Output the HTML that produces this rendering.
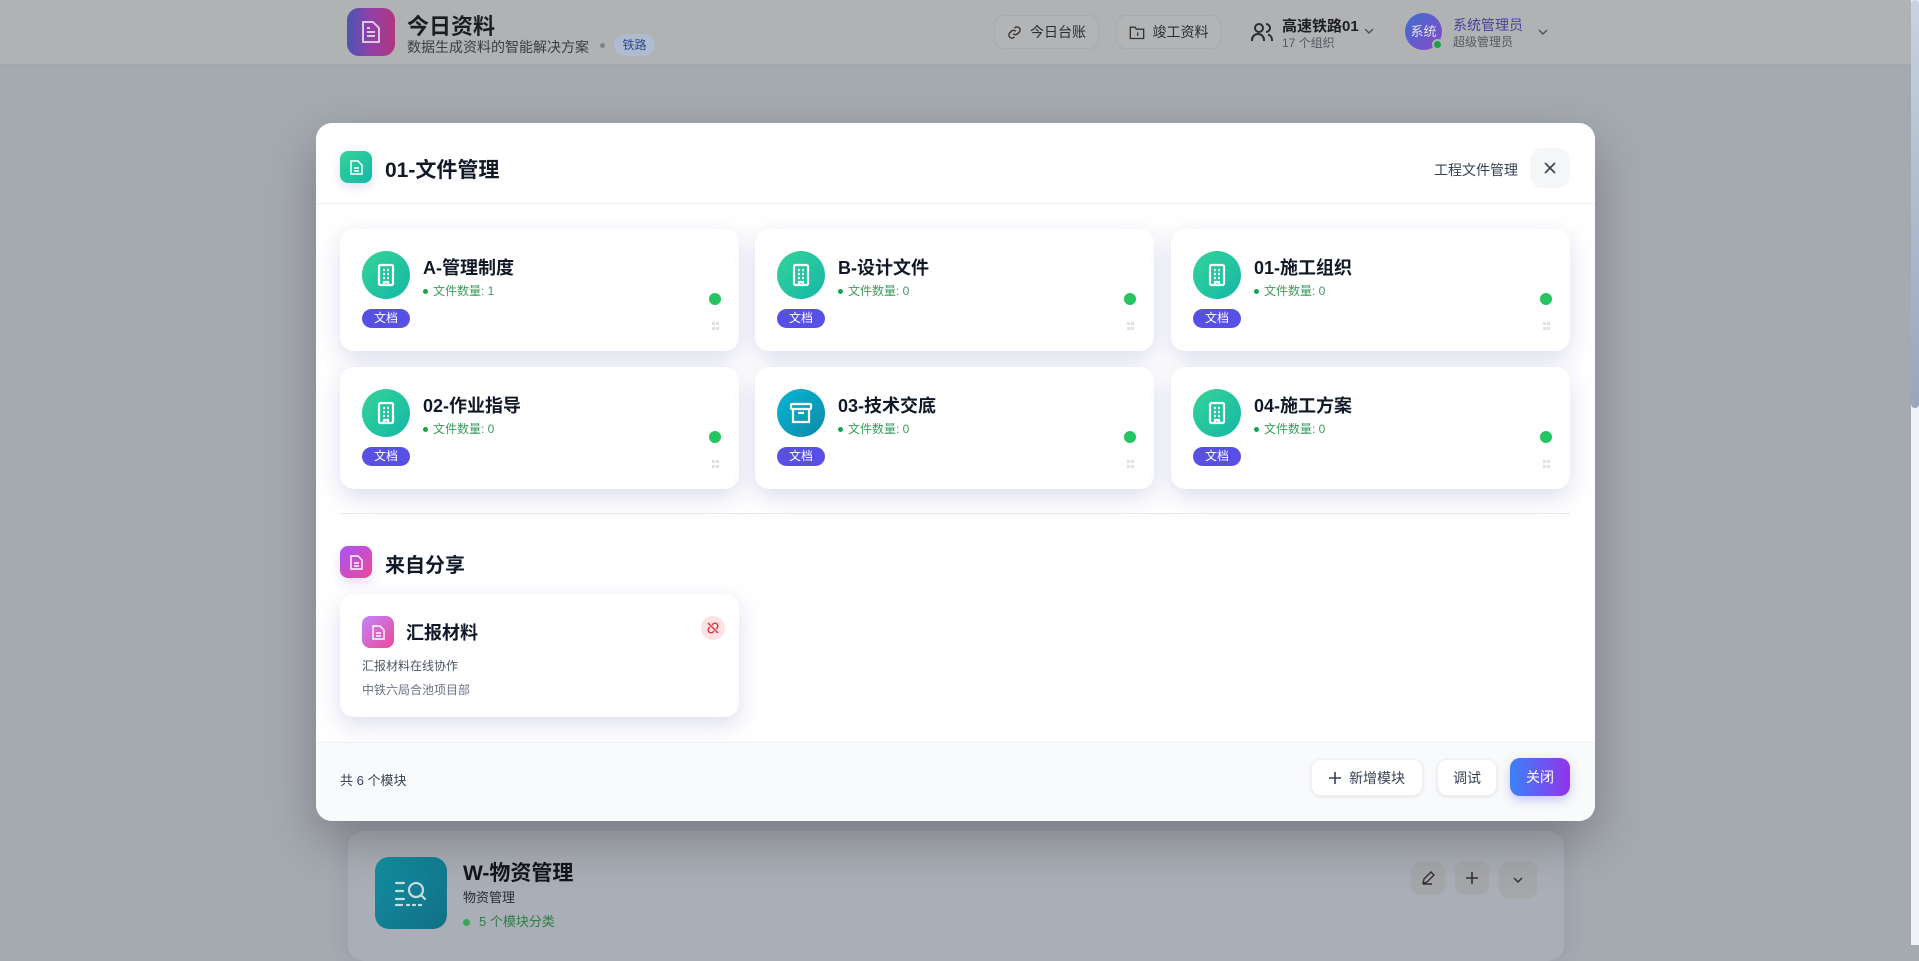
<!DOCTYPE html>
<html><head><meta charset="utf-8"><style>
*{box-sizing:border-box;margin:0;padding:0}
body{width:1919px;height:945px;overflow:hidden;background:#a5a9b0;font-family:"Liberation Sans","Noto Sans CJK SC",sans-serif;position:relative;color:#111827}
.abs{position:absolute}
.hdr{left:0;top:0;width:1911px;height:65px;background:#b1b2b4;border-bottom:1px solid #a2a5aa}
.sb{left:1911px;top:0;width:8px;height:945px;background:#eef1f6}
.sbt{left:1911px;top:0;width:8px;height:408px;background:linear-gradient(#c8d2e0,#98a6bc);border-radius:4px}
.hbtn{top:15px;height:34px;border:1px solid #a8aaad;border-radius:10px;background:#b3b4b6;font-size:14px;color:#2a2d33;display:flex;align-items:center;justify-content:center;gap:8px;white-space:nowrap}
.modal{left:316px;top:123px;width:1279px;height:698px;background:#fff;border-radius:16px;overflow:hidden;box-shadow:0 20px 50px rgba(0,0,0,.25)}
.card{width:399px;height:122px;background:#fff;border-radius:14px;box-shadow:0 8px 24px rgba(99,102,180,.22)}
.circ{left:22px;top:22px;width:48px;height:48px;border-radius:50%;background:linear-gradient(135deg,#34d399,#14b8a6);display:flex;align-items:center;justify-content:center}
.ct{left:83px;top:25px;font-size:18px;font-weight:bold;color:#111827}
.cc{left:83px;top:53px;font-size:12px;color:#3b9b5c}
.cc:before{content:"";display:inline-block;width:5px;height:5px;border-radius:50%;background:#16a34a;margin-right:5px;vertical-align:middle}
.badge{left:22px;top:80px;width:48px;height:19px;border-radius:10px;background:#5850e4;color:#fff;font-size:12px;text-align:center;line-height:19px}
.gd{left:369px;top:64px;width:12px;height:12px;border-radius:50%;background:#22c55e}
.hd{left:372px;top:93px;width:7px;height:9px}
.hd:before,.hd:after{content:"";position:absolute;left:0;width:7px;height:3px;border-left:3px solid #dcdfe4;border-right:3px solid #dcdfe4;box-sizing:border-box}
.hd:before{top:0}.hd:after{top:5px}
.fb{top:636px;height:37px;border-radius:10px;background:#fff;box-shadow:0 1px 3px rgba(0,0,0,.1);border:1px solid #eef0f3;font-size:14px;color:#374151;display:flex;align-items:center;justify-content:center;gap:8px}
.bld{width:18px;height:24px}
</style></head><body>
<div class="abs hdr"></div>
<div class="abs" style="left:347px;top:8px;width:48px;height:48px;border-radius:12px;background:linear-gradient(90deg,#4a55b4,#9340a6,#b1367e);display:flex;align-items:center;justify-content:center">
<svg width="22" height="24" viewBox="0 0 22 24" fill="none" stroke="#d8c8e0" stroke-width="2"><path d="M3 2h10l6 6v14H3z"/><path d="M7 12h8M7 16h8M7 8h3"/></svg></div>
<div class="abs" style="left:407px;top:9px;font-size:22px;font-weight:bold;color:#1c1d22">今日资料</div>
<div class="abs" style="left:407px;top:37px;font-size:14px;color:#3b3d44">数据生成资料的智能解决方案</div>
<div class="abs" style="left:600px;top:43px;width:5px;height:5px;border-radius:50%;background:#7c818a"></div>
<div class="abs" style="left:614px;top:34px;width:41px;height:22px;border-radius:11px;background:#aebbd0;color:#2f4a86;font-size:12px;text-align:center;line-height:22px">铁路</div>
<div class="abs hbtn" style="left:994px;width:105px"><svg width="15" height="15" viewBox="0 0 24 24" fill="none" stroke="#333" stroke-width="2.2"><path d="M10 14a5 5 0 0 0 7 0l3-3a5 5 0 0 0-7-7l-1 1M14 10a5 5 0 0 0-7 0l-3 3a5 5 0 0 0 7 7l1-1"/></svg>今日台账</div>
<div class="abs hbtn" style="left:1116px;width:105px"><svg width="16" height="15" viewBox="0 0 24 22" fill="none" stroke="#333" stroke-width="2"><path d="M2 3h7l2 3h11v14H2z"/><path d="M13 11v5"/></svg>竣工资料</div>
<svg class="abs" style="left:1250px;top:20px" width="24" height="24" viewBox="0 0 24 24" fill="none" stroke="#2a2d33" stroke-width="2"><circle cx="9" cy="8" r="4"/><path d="M2 21v-1a6 6 0 0 1 12 0v1M16 4a4 4 0 0 1 0 8M22 21v-1a6 6 0 0 0-4-5.6"/></svg>
<div class="abs" style="left:1282px;top:15px;font-size:15px;font-weight:bold;color:#1c1d22">高速铁路01</div>
<div class="abs" style="left:1282px;top:34px;font-size:12px;color:#555a62">17 个组织</div>
<svg class="abs" style="left:1363px;top:26px" width="12" height="10" viewBox="0 0 12 10" fill="none" stroke="#555" stroke-width="1.5"><path d="M2 3l4 4 4-4"/></svg>
<div class="abs" style="left:1405px;top:13px;width:37px;height:37px;border-radius:50%;background:linear-gradient(135deg,#3b6fd0,#8a48c8);color:#e6e2f0;font-size:13px;line-height:37px;text-align:center">系统</div>
<div class="abs" style="left:1432px;top:39px;width:11px;height:11px;border-radius:50%;background:#16a34a;border:2px solid #b1b2b4"></div>
<div class="abs" style="left:1453px;top:15px;font-size:14px;color:#4a3f9a">系统管理员</div>
<div class="abs" style="left:1453px;top:33px;font-size:12px;color:#555a62">超级管理员</div>
<svg class="abs" style="left:1537px;top:27px" width="12" height="10" viewBox="0 0 12 10" fill="none" stroke="#555" stroke-width="1.5"><path d="M2 3l4 4 4-4"/></svg>

<!-- background card -->
<div class="abs" style="left:348px;top:831px;width:1216px;height:130px;border-radius:16px;background:#aaaeb6;box-shadow:0 0 20px rgba(80,80,120,.15)"></div>
<div class="abs" style="left:375px;top:857px;width:72px;height:72px;border-radius:14px;background:linear-gradient(135deg,#1590a2,#0f6f86);display:flex;align-items:center;justify-content:center">
<svg width="34" height="28" viewBox="0 0 34 28" fill="none" stroke="#c6dde2" stroke-width="2.2" stroke-linecap="round"><path d="M2 4h8M2 12h7M2 20h8M2 26h6M13 26h2M19 26h2M25 26h2"/><circle cx="22" cy="11" r="7"/><path d="M27 16l4 4"/></svg></div>
<div class="abs" style="left:463px;top:857px;font-size:21px;font-weight:bold;color:#141518">W-物资管理</div>
<div class="abs" style="left:463px;top:887px;font-size:13px;color:#2a2d33">物资管理</div>
<div class="abs" style="left:463px;top:911px;font-size:13px;color:#2f7d45"><span style="display:inline-block;width:7px;height:7px;border-radius:50%;background:#3aa35c;margin-right:9px;vertical-align:middle"></span>5 个模块分类</div>
<div class="abs" style="left:1411px;top:861px;width:34px;height:34px;border-radius:10px;background:#a6a7aa;display:flex;align-items:center;justify-content:center"><svg width="16" height="16" viewBox="0 0 16 16" fill="none" stroke="#333" stroke-width="1.4"><path d="M3 13l1-4 7-7 3 3-7 7zM3 14h9"/></svg></div>
<div class="abs" style="left:1455px;top:861px;width:34px;height:34px;border-radius:10px;background:#a6a7aa;display:flex;align-items:center;justify-content:center"><svg width="14" height="14" viewBox="0 0 14 14" stroke="#333" stroke-width="1.6"><path d="M7 1v12M1 7h12"/></svg></div>
<div class="abs" style="left:1499px;top:861px;width:38px;height:38px;border-radius:10px;background:#a6a7aa;display:flex;align-items:center;justify-content:center"><svg width="12" height="8" viewBox="0 0 12 8" fill="none" stroke="#333" stroke-width="1.5"><path d="M2 2l4 4 4-4"/></svg></div>

<div class="abs sb"></div><div class="abs sbt"></div>

<div class="abs modal">
 <div class="abs" style="left:0;top:0;width:1279px;height:81px;border-bottom:1px solid #eef0f3"></div>
 <div class="abs" style="left:24px;top:28px;width:32px;height:32px;border-radius:8px;background:linear-gradient(135deg,#34d399,#14b8a6);display:flex;align-items:center;justify-content:center;box-shadow:0 4px 10px rgba(100,100,200,.2)"><svg width="13" height="15" viewBox="0 0 13 15" fill="none" stroke="#fff" stroke-width="1.4"><path d="M1 1h7l4 4v9H1z"/><path d="M4 8h5M4 11h5"/></svg></div>
 <div class="abs" style="left:69px;top:31px;font-size:21px;font-weight:bold;color:#111827">01-文件管理</div>
 <div class="abs" style="left:1118px;top:37px;font-size:14px;color:#374151">工程文件管理</div>
 <div class="abs" style="left:1214px;top:25px;width:40px;height:40px;border-radius:12px;background:#f5f6f8;display:flex;align-items:center;justify-content:center"><svg width="14" height="14" viewBox="0 0 14 14" stroke="#374151" stroke-width="1.6"><path d="M2 2l10 10M12 2L2 12"/></svg></div>

 <!-- cards -->
 <div class="abs card" style="left:24px;top:106px"><div class="abs circ"><svg class="bld" viewBox="0 0 18 24" fill="none" stroke="#fff" stroke-width="2.2"><rect x="2" y="2" width="14" height="20" rx="1.5"/><path d="M6 7h2M10 7h2M6 11h2M10 11h2M6 15h2M10 15h2M7 22v-3h4v3"/></svg></div><div class="abs ct">A-管理制度</div><div class="abs cc">文件数量: 1</div><div class="abs badge">文档</div><div class="abs gd"></div><div class="abs hd"></div></div>
 <div class="abs card" style="left:439px;top:106px"><div class="abs circ"><svg class="bld" viewBox="0 0 18 24" fill="none" stroke="#fff" stroke-width="2.2"><rect x="2" y="2" width="14" height="20" rx="1.5"/><path d="M6 7h2M10 7h2M6 11h2M10 11h2M6 15h2M10 15h2M7 22v-3h4v3"/></svg></div><div class="abs ct">B-设计文件</div><div class="abs cc">文件数量: 0</div><div class="abs badge">文档</div><div class="abs gd"></div><div class="abs hd"></div></div>
 <div class="abs card" style="left:855px;top:106px"><div class="abs circ"><svg class="bld" viewBox="0 0 18 24" fill="none" stroke="#fff" stroke-width="2.2"><rect x="2" y="2" width="14" height="20" rx="1.5"/><path d="M6 7h2M10 7h2M6 11h2M10 11h2M6 15h2M10 15h2M7 22v-3h4v3"/></svg></div><div class="abs ct">01-施工组织</div><div class="abs cc">文件数量: 0</div><div class="abs badge">文档</div><div class="abs gd"></div><div class="abs hd"></div></div>
 <div class="abs card" style="left:24px;top:244px"><div class="abs circ"><svg class="bld" viewBox="0 0 18 24" fill="none" stroke="#fff" stroke-width="2.2"><rect x="2" y="2" width="14" height="20" rx="1.5"/><path d="M6 7h2M10 7h2M6 11h2M10 11h2M6 15h2M10 15h2M7 22v-3h4v3"/></svg></div><div class="abs ct">02-作业指导</div><div class="abs cc">文件数量: 0</div><div class="abs badge">文档</div><div class="abs gd"></div><div class="abs hd"></div></div>
 <div class="abs card" style="left:439px;top:244px"><div class="abs circ" style="background:linear-gradient(135deg,#06b6d4,#0e89a8)"><svg width="24" height="22" viewBox="0 0 24 22" fill="none" stroke="#fff" stroke-width="2.2"><rect x="2" y="2" width="20" height="5" rx="1"/><path d="M4 7v13h16V7M9 11h6"/></svg></div><div class="abs ct">03-技术交底</div><div class="abs cc">文件数量: 0</div><div class="abs badge">文档</div><div class="abs gd"></div><div class="abs hd"></div></div>
 <div class="abs card" style="left:855px;top:244px"><div class="abs circ"><svg class="bld" viewBox="0 0 18 24" fill="none" stroke="#fff" stroke-width="2.2"><rect x="2" y="2" width="14" height="20" rx="1.5"/><path d="M6 7h2M10 7h2M6 11h2M10 11h2M6 15h2M10 15h2M7 22v-3h4v3"/></svg></div><div class="abs ct">04-施工方案</div><div class="abs cc">文件数量: 0</div><div class="abs badge">文档</div><div class="abs gd"></div><div class="abs hd"></div></div>

 <div class="abs" style="left:24px;top:390px;width:1230px;height:1px;background:#e5e7eb"></div>
 <div class="abs" style="left:24px;top:423px;width:32px;height:32px;border-radius:8px;background:linear-gradient(135deg,#a855f7,#ec4899);display:flex;align-items:center;justify-content:center;box-shadow:0 4px 10px rgba(100,100,200,.2)"><svg width="13" height="15" viewBox="0 0 13 15" fill="none" stroke="#fff" stroke-width="1.4"><path d="M1 1h7l4 4v9H1z"/><path d="M4 8h5M4 11h5"/></svg></div>
 <div class="abs" style="left:69px;top:426px;font-size:20px;font-weight:bold;color:#111827">来自分享</div>
 <div class="abs card" style="left:24px;top:471px;height:123px">
  <div class="abs" style="left:22px;top:22px;width:32px;height:32px;border-radius:8px;background:linear-gradient(135deg,#c084fc,#ec4899);display:flex;align-items:center;justify-content:center"><svg width="13" height="15" viewBox="0 0 13 15" fill="none" stroke="#fff" stroke-width="1.4"><path d="M1 1h7l4 4v9H1z"/><path d="M4 8h5M4 11h5"/></svg></div>
  <div class="abs" style="left:66px;top:25px;font-size:18px;font-weight:bold">汇报材料</div>
  <div class="abs" style="left:22px;top:63px;font-size:12px;color:#4b5563">汇报材料在线协作</div>
  <div class="abs" style="left:22px;top:87px;font-size:12px;color:#6b7280">中铁六局合池项目部</div>
  <div class="abs" style="left:361px;top:22px;width:24px;height:24px;border-radius:50%;background:#fde2e4;display:flex;align-items:center;justify-content:center"><svg width="14" height="14" viewBox="0 0 14 14" fill="none" stroke="#e0333f" stroke-width="1.4"><path d="M6 4l1-1a2.5 2.5 0 0 1 4 4l-1 1M8 10l-1 1a2.5 2.5 0 0 1-4-4l1-1M2 2l10 10"/></svg></div>
 </div>

 <div class="abs" style="left:0;top:619px;width:1279px;height:79px;background:#f9fafb;border-top:1px solid #eef0f3"></div>
 <div class="abs" style="left:24px;top:647px;font-size:13px;color:#374151">共 6 个模块</div>
 <div class="abs fb" style="left:995px;width:112px"><svg width="12" height="12" viewBox="0 0 12 12" stroke="#374151" stroke-width="1.6"><path d="M6 0v12M0 6h12"/></svg>新增模块</div>
 <div class="abs fb" style="left:1121px;width:60px">调试</div>
 <div class="abs fb" style="left:1194px;width:60px;height:38px;top:635px;border:none;background:linear-gradient(90deg,#3b82f6,#9333ea);color:#fff;box-shadow:0 4px 10px rgba(99,102,241,.35)">关闭</div>
</div>
</body></html>
